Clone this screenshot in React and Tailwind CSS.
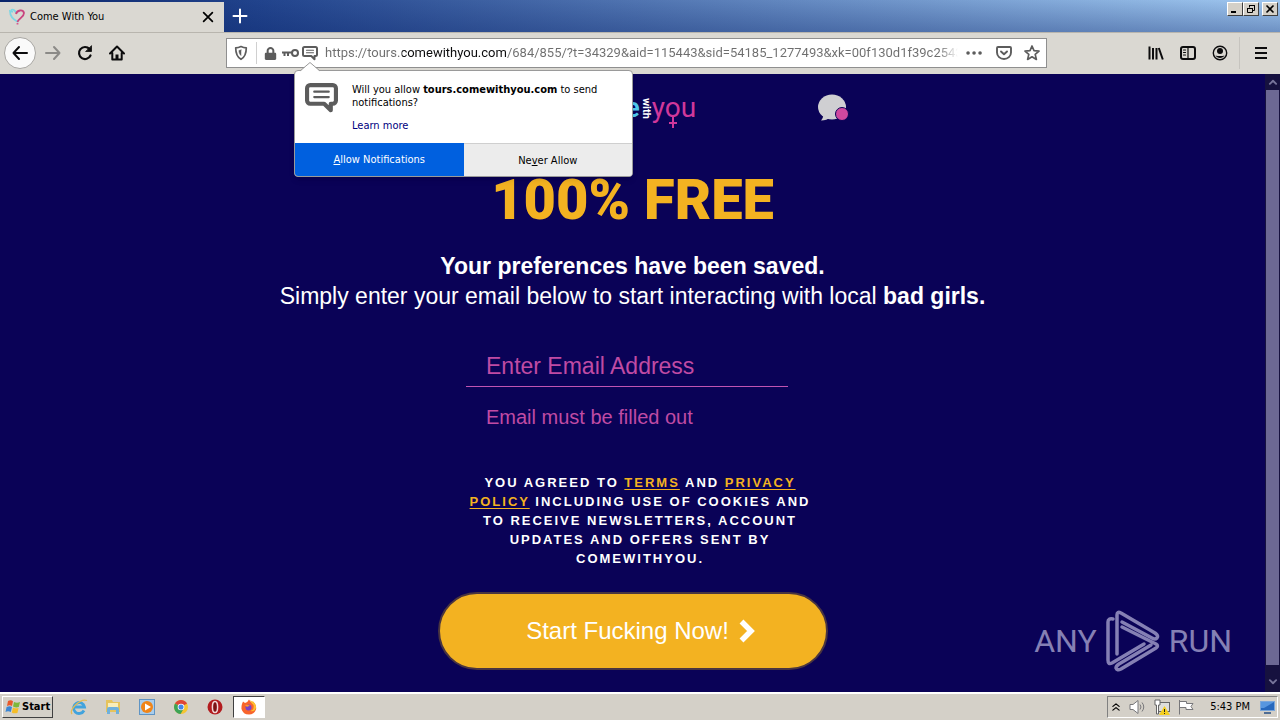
import React, { useState } from 'react';
import { FaLock } from 'react-icons/fa';

const ADDRESS =
  'https://tours.comewithyou.com/684/855/?t=34329&aid=115443&sid=54185_1277493&xk=00f130d1f39c2543a';

function Icon({ size = 16, className = '', children }) {
  return (
    <svg
      width={size}
      height={size}
      viewBox="0 0 16 16"
      fill="none"
      stroke="currentColor"
      strokeWidth="2"
      strokeLinecap="round"
      strokeLinejoin="round"
      className={className}
      aria-hidden="true"
    >
      {children}
    </svg>
  );
}

function ToolButton({ label, children }) {
  return (
    <button aria-label={label} className="flex h-8 w-8 shrink-0 items-center justify-center text-[#0c0c0d]">
      {children}
    </button>
  );
}

function WindowButton({ label, children }) {
  return (
    <button
      aria-label={label}
      className="flex h-[14px] w-4 items-center justify-center border border-t-white border-l-white border-r-[#404040] border-b-[#404040] bg-[#d4d0c8] text-black"
    >
      <svg width="10" height="10" viewBox="0 0 10 10" fill="none" stroke="currentColor" aria-hidden="true">
        {children}
      </svg>
    </button>
  );
}

function TitleBar() {
  return (
    <div className="flex h-8 shrink-0 bg-[linear-gradient(to_bottom,transparent,#0a246a55),linear-gradient(to_right,#0a246a,#21438c_20%,#a0c8f0)]">
      <div className="mt-[2px] flex w-56 items-center gap-1 bg-[#dad8d2] pl-2">
        <svg width="18" height="18" viewBox="0 0 18 18" fill="none" strokeWidth="1.8" aria-hidden="true">
          <path d="M10 14C6 12 2 8 2 3l3 1M3 2c2-1 4 0 5 3" stroke="#7fd6e4" />
          <path d="M8 6c1-4 7-5 8-1 0 4-5 5-6.500 9" stroke="#c9447f" />
          <path d="M9.500 15v1.500" stroke="#d8558f" />
        </svg>
        <span className="flex-1 text-[11px]">Come With You</span>
        <button aria-label="Close tab" className="flex h-8 w-8 items-center justify-center">
          <Icon size={14}>
            <path d="M3 3l10 10M13 3L3 13" />
          </Icon>
        </button>
      </div>
      <button aria-label="New tab" className="flex h-8 w-8 items-center justify-center text-white">
        <Icon>
          <path d="M8 1.500v13M1.500 8h13" />
        </Icon>
      </button>
      <div className="ml-auto flex h-[18px] items-center pr-[2px]">
        <WindowButton label="Minimize">
          <path d="M1 8h5" strokeWidth="2" />
        </WindowButton>
        <WindowButton label="Restore">
          <path d="M3.500 3.500v-2h5v5h-2M3 1.500h6M1.500 4.500h5v4h-5zM1 4.500h6" />
        </WindowButton>
        <span className="w-[3px]" />
        <WindowButton label="Close">
          <path d="M1.500 1.500l7 7M8.500 1.500l-7 7" strokeWidth="1.600" />
        </WindowButton>
      </div>
    </div>
  );
}

function ChatGlyph({ size }) {
  return (
    <Icon size={size}>
      <path d="M2.500 2h11a1.500 1.500 0 0 1 1.500 1.500v6a1.500 1.500 0 0 1-1.500 1.500H12.500v3.200L9.300 11h-6.800A1.500 1.500 0 0 1 1 9.500v-6A1.500 1.500 0 0 1 2.500 2z" />
      <path d="M4.500 5.200h7M4.500 7.800h7" strokeWidth="1.100" />
    </Icon>
  );
}

function NotificationPopup() {
  return (
    <div className="absolute top-full left-[67px] z-20 mt-[3px] w-[339px] rounded-[4px] border border-[#9a9a9a] bg-white text-[11px] leading-[13px] text-black shadow-md">
      <svg width="20" height="10" viewBox="0 0 20 10" className="absolute -top-[9px] left-[5px]" aria-hidden="true">
        <path d="M0 9.500L10 0.500L20 9.500V10H0z" fill="#fff" />
        <path d="M0 9L10 0.500L20 9" fill="none" stroke="#9a9a9a" />
      </svg>
      <div className="flex h-[72px] gap-[14px] pt-[10px] pl-[10px]">
        <span className="shrink-0 text-[#5c5c5c]">
          <ChatGlyph size={33} />
        </span>
        <div className="pt-[2px] pr-6">
          <p>
            Will you allow <b>tours.comewithyou.com</b> to send
            <br />
            notifications?
          </p>
          <a href="#learn" className="mt-[10px] block text-[#000080]">
            Learn more
          </a>
        </div>
      </div>
      <div className="flex h-[33px]">
        <button className="flex-1 rounded-bl-[3px] bg-[#0060df] text-white">
          <u>A</u>llow Notifications
        </button>
        <button className="flex-1 rounded-br-[3px] border-t border-[#cfcfcf] bg-[#ececec]">
          Ne<u>v</u>er Allow
        </button>
      </div>
    </div>
  );
}

function AddressBar() {
  const [url, setUrl] = useState(ADDRESS);

  return (
    <div className="relative mx-[93px] flex h-[30px] min-w-0 flex-1 items-center border border-[#8f8f8f] bg-white text-[#5c5c5c]">
      <span className="flex w-7 justify-center">
        <Icon>
          <path d="M8 1.500c2 1 3.500 1.300 5.300 1.300 0 5.500-1 9.200-5.300 11.500C3.700 12 2.700 8.300 2.700 2.800 4.500 2.800 6 2.500 8 1.500z" strokeWidth="1.700" />
          <path d="M8 5v5.500c-1.500-1.200-2-2.800-2.100-5C6.700 5.400 7.400 5.200 8 5z" fill="currentColor" strokeWidth="0.500" />
        </Icon>
      </span>
      <span className="mr-[7px] ml-px h-[22px] w-px bg-[#d0d0d0]" />
      <FaLock size={13} />
      <svg width="17" height="16" viewBox="0 0 17 16" fill="none" stroke="currentColor" strokeWidth="2" className="ml-[5px]" aria-hidden="true">
        <circle cx="13" cy="8" r="3" />
        <path d="M0 7.500h10M2.500 8v3M6 8v3" />
      </svg>
      <span className="ml-[3px]">
        <ChatGlyph size={16} />
      </span>
      <input
        type="text"
        aria-label="Address"
        value={url}
        onChange={(e) => setUrl(e.target.value)}
        className="ml-[7px] min-w-0 flex-1 bg-[linear-gradient(to_right,#6e6e6e_77px,#0c0c0d_77px,#0c0c0d_182px,#6e6e6e_182px,#6e6e6e_97%,transparent)] bg-clip-text font-['Roboto','Liberation_Sans',sans-serif] text-[13px] text-transparent outline-none"
      />
      <button aria-label="Page actions" className="flex w-8 justify-center">
        <Icon>
          <path d="M2 8h.1M8 8h.1M14 8h.1" strokeWidth="3.500" />
        </Icon>
      </button>
      <button aria-label="Save to Pocket" className="flex w-7 justify-center">
        <Icon>
          <path d="M2 2h12a1 1 0 0 1 1 1v4.500a7 6.500 0 0 1-14 0V3a1 1 0 0 1 1-1zM5 6.500l3 2.800 3-2.800" strokeWidth="1.900" />
        </Icon>
      </button>
      <button aria-label="Bookmark this page" className="flex w-7 justify-center">
        <Icon>
          <path d="M8 1l2 4.600 5 .5-3.800 3.300 1.200 5L8 11.800l-4.400 2.600 1.200-5L1 6.100l5-.5z" strokeWidth="1.700" />
        </Icon>
      </button>
      <NotificationPopup />
    </div>
  );
}

function Toolbar() {
  return (
    <div className="flex h-[42px] shrink-0 items-center border-t border-[#b8b5ae] bg-[#dad8d2] pr-[3px] pb-px pl-1">
      <button
        aria-label="Back"
        className="mr-px flex h-8 w-8 shrink-0 items-center justify-center rounded-full border border-[#a8a6a2] bg-[#fafafa] text-[#0c0c0d]"
      >
        <Icon>
          <path d="M15 8H1.500M7 2L1.500 8l5.500 6" />
        </Icon>
      </button>
      <button aria-label="Forward" disabled className="flex h-8 w-8 shrink-0 items-center justify-center text-[#8b8a87]">
        <Icon>
          <path d="M1 8h13.500M9 2l5.500 6L9 14" />
        </Icon>
      </button>
      <ToolButton label="Reload">
        <Icon>
          <path d="M13.500 10.500A6 6 0 1 1 12.500 4" strokeWidth="2.200" />
          <path d="M14.500 1v5.500H9z" fill="currentColor" strokeWidth="0.800" />
        </Icon>
      </ToolButton>
      <ToolButton label="Home">
        <Icon>
          <path d="M1 8.500L8 1.500l7 7M3.300 8v6.500h9.400V8" />
          <path d="M8 9.500v4.500" strokeWidth="3" strokeLinecap="butt" />
        </Icon>
      </ToolButton>
      <AddressBar />
      <ToolButton label="Library">
        <Icon>
          <path d="M1.500 1.500v13M5 3v11.500M8.500 3v11.500M10.800 3l4 11.500" strokeLinecap="butt" />
        </Icon>
      </ToolButton>
      <ToolButton label="Sidebars">
        <Icon>
          <rect x="1" y="2" width="14" height="12" rx="2" />
          <path d="M8 2v12M3.500 5h2M3.500 7.500h2M3.500 10h2" strokeWidth="1.200" />
        </Icon>
      </ToolButton>
      <ToolButton label="Account">
        <Icon>
          <circle cx="8" cy="8" r="6.700" strokeWidth="1.400" />
          <circle cx="8" cy="6" r="3" fill="currentColor" stroke="none" />
          <path d="M3.500 10.500c2 .8 7 .8 9 0-1.500 3.300-7.500 3.300-9 0z" fill="currentColor" stroke="none" />
        </Icon>
      </ToolButton>
      <span className="mr-[5px] ml-[3px] h-8 w-px bg-[#c6c4bf]" />
      <ToolButton label="Menu">
        <Icon>
          <path d="M2 3h12M2 8h12M2 13h12" strokeLinecap="butt" />
        </Icon>
      </ToolButton>
    </div>
  );
}

function SiteLogo() {
  return (
    <div className="flex items-center font-['Roboto','Liberation_Sans',sans-serif] text-[28px] leading-10">
      <span className="ml-14 font-semibold text-[#4fc8ee]">e</span>
      <span className="mx-px text-[11px] leading-3 font-bold text-white [writing-mode:vertical-rl]">with</span>
      <span className="relative text-[#d0389b]">
        you
        <svg width="10" height="12" viewBox="0 0 10 12" stroke="#d0389b" strokeWidth="2" className="absolute bottom-0 left-4" aria-hidden="true">
          <path d="M5 0v12M1 7h8" />
        </svg>
      </span>
    </div>
  );
}

function Watermark() {
  return (
    <div className="absolute right-12 bottom-5 z-10 flex items-center gap-2 font-['Roboto','Liberation_Sans',sans-serif] text-[32px] leading-none text-[#8580b4]">
      <span>ANY</span>
      <svg width="56" height="62" viewBox="0 0 56 62" fill="none" stroke="currentColor" strokeWidth="3.500" strokeLinejoin="round" strokeLinecap="round" aria-hidden="true">
        <path d="M12 44V5q0-4 4-2L50 23q4 3 2 5-2 2-5 0L17 12" />
        <path d="M8 9Q3 8 3 12v38q0 5 4 3L39 34" />
        <path d="M17 17l34 17q3 2 0 4L16 59q-4 2-5-1 0-2 3-4L46 35" />
      </svg>
      <span>RUN</span>
    </div>
  );
}

function SignupPage() {
  const [email, setEmail] = useState('');

  return (
    <main className="flex min-w-0 flex-1 flex-col items-center overflow-hidden font-['Liberation_Sans',Arial,sans-serif] text-white">
      <header className="grid w-full grid-cols-[1fr_auto_1fr] items-center pt-[14px]">
        <span />
        <SiteLogo />
        <button aria-label="Messages" className="relative ml-[122px] w-[31px]">
          <svg width="29" height="28" viewBox="0 0 29 28" fill="#cfcfd2" aria-hidden="true">
            <ellipse cx="14" cy="13" rx="14" ry="12.500" />
            <path d="M5 19q1 4-2 7.500 6 0 9-3z" />
          </svg>
          <span className="absolute right-0 bottom-px h-[14px] w-[14px] rounded-full border border-[#0a0257] bg-[#d0489f]" />
        </button>
      </header>

      <h1 className="mt-9 font-['Roboto','Liberation_Sans',sans-serif] text-[56px] leading-[72px] font-black text-[#f3b221]">
        100% FREE
      </h1>
      <p className="mt-[15px] text-center text-[23px] leading-[30px]">
        <b>Your preferences have been saved.</b>
        <br />
        Simply enter your email below to start interacting with local <b>bad girls.</b>
      </p>

      <form className="mt-9 flex flex-col items-center" onSubmit={(e) => e.preventDefault()}>
        <div className="ml-[15px] w-[348px]">
          <input
            type="email"
            aria-label="Enter Email Address"
            placeholder="Enter Email Address"
            value={email}
            onChange={(e) => setEmail(e.target.value)}
            className="h-10 w-[322px] border-b border-[#c054b2] px-5 text-[23px] text-[#c04ba4] outline-none placeholder:text-[#c04ba4]"
          />
          <p className="mt-3 px-5 text-[20px] leading-9 text-[#c04ba4]">Email must be filled out</p>
          <p className="mt-[38px] text-center text-[13px] leading-[19px] font-bold tracking-[2px] whitespace-nowrap uppercase">
            <span className="block">
              You agreed to <a href="#terms" className="text-[#f3b221] underline underline-offset-2">Terms</a> and{' '}
              <a href="#privacy" className="text-[#f3b221] underline underline-offset-2">Privacy</a>
            </span>
            <span className="block">
              <a href="#privacy" className="text-[#f3b221] underline underline-offset-2">Policy</a> including use of cookies and
            </span>
            <span className="block">to receive newsletters, account</span>
            <span className="block">updates and offers sent by</span>
            <span className="block">ComeWithYou.</span>
          </p>
        </div>
        <button className="mt-6 flex h-[78px] w-[390px] items-center justify-center gap-[10px] rounded-full border-2 border-[#4a3540] bg-[#f3b221] pl-4 text-[24px]">
          Start Fucking Now!
          <svg width="16" height="24" viewBox="0 0 16 24" fill="none" stroke="currentColor" strokeWidth="5.500" aria-hidden="true">
            <path d="M2.500 2.500L12 12l-9.500 9.500" />
          </svg>
        </button>
      </form>
    </main>
  );
}

function ScrollBar() {
  return (
    <div className="flex w-[15px] shrink-0 flex-col items-center bg-[#16113f] text-[#77749a]">
      <Icon size={10} className="my-[3px]">
        <path d="M3 11l5-5 5 5" strokeWidth="3" />
      </Icon>
      <div className="w-[13px] flex-1 bg-[#6c6894]" />
      <Icon size={10} className="mt-3 mb-[5px]">
        <path d="M3 5l5 5 5-5" strokeWidth="3" />
      </Icon>
    </div>
  );
}

function Taskbar() {
  return (
    <footer className="flex h-7 shrink-0 items-center border-t-2 border-white bg-[#d4d0c8] px-[2px] text-black">
      <button className="flex h-[22px] items-center gap-px border border-t-white border-l-white border-r-[#404040] border-b-[#404040] px-[2px] text-[11px] font-bold">
        <svg width="16" height="16" viewBox="0 0 16 16" aria-hidden="true">
          <path d="M3 2q3-1.500 5 .3L7 7Q5 5.500 2 7z" fill="#e8592a" />
          <path d="M9 3q3 1.500 6 0l-1.200 5Q11 9 8 7.500z" fill="#7db83a" />
          <path d="M1.600 8Q5 6.700 7 8l-1.200 5Q3 11.500.5 13z" fill="#3b86d4" />
          <path d="M8 8.500q3 1.500 5.600.4l-1.200 5Q9 15 6.800 13.500z" fill="#f5bd28" />
        </svg>
        Start
      </button>

      <nav className="ml-[10px] flex items-center gap-[2px]">
        <button aria-label="Internet Explorer" className="flex h-[22px] w-8 items-center justify-center">
          <svg width="18" height="18" viewBox="0 0 18 18" fill="none" aria-hidden="true">
            <path d="M14 12.500A5.500 5.500 0 1 1 14.500 9H5" stroke="#41a3dd" strokeWidth="2.800" />
            <path d="M2 16C-1 12 10 0 17 2.500" stroke="#e3bb55" strokeWidth="1.300" />
          </svg>
        </button>
        <button aria-label="File Explorer" className="flex h-[22px] w-8 items-center justify-center">
          <svg width="18" height="18" viewBox="0 0 18 18" aria-hidden="true">
            <path d="M2 2h6l1 2h7v10H2z" fill="#e6c35c" />
            <path d="M4 5h10v5H4z" fill="#f8edba" />
            <path d="M3 16v-5q0-2 2-2h8q2 0 2 2v5h-3v-4H6v4z" fill="#6fb0dc" />
          </svg>
        </button>
        <button aria-label="Media Player" className="flex h-[22px] w-8 items-center justify-center">
          <svg width="16" height="16" viewBox="0 0 16 16" aria-hidden="true">
            <rect x=".5" y=".5" width="15" height="15" fill="#a9cdec" stroke="#5f94c4" />
            <circle cx="8" cy="8" r="6" fill="#f08519" />
            <path d="M6 4.500v7L12 8z" fill="#fff" />
          </svg>
        </button>
        <button aria-label="Chrome" className="flex h-[22px] w-8 items-center justify-center">
          <svg width="14" height="14" viewBox="0 0 16 16" aria-hidden="true">
            <circle cx="8" cy="8" r="8" fill="#f5c532" />
            <path d="M8 8L1.100 4A8 8 0 0 1 14.900 4z" fill="#de4638" />
            <path d="M8 8L1.100 4A8 8 0 0 0 7.500 16L11 10z" fill="#3da356" />
            <circle cx="8" cy="8" r="3.800" fill="#fff" />
            <circle cx="8" cy="8" r="2.900" fill="#4486e8" />
          </svg>
        </button>
        <button aria-label="Opera" className="flex h-[22px] w-8 items-center justify-center">
          <svg width="16" height="16" viewBox="0 0 16 16" aria-hidden="true">
            <circle cx="8" cy="8" r="7.500" fill="#b31c1f" />
            <ellipse cx="8" cy="8" rx="2.600" ry="5.600" fill="#7c1214" stroke="#f1d9d9" strokeWidth="1.500" />
          </svg>
        </button>
        <button
          aria-label="Firefox"
          className="flex h-[22px] w-8 items-center justify-center border border-t-[#404040] border-l-[#404040] border-r-white border-b-white bg-white"
        >
          <svg width="16" height="16" viewBox="0 0 16 16" aria-hidden="true">
            <path d="M1 5l1-2.500L4 4q3-1 4-3.500 1 2 3 3l1-1q4 4 3 8-2 5-7 5-6 0-7.500-5.500Q.3 7 1 5z" fill="#f8642c" />
            <path d="M9 1q1 3 3.500 5 1 5-3 6 4 1 5.500-3 .5-4-3-6.500-1 0-3-1.500z" fill="#fdc02f" />
            <circle cx="7.500" cy="8.500" r="3" fill="#7a42c8" />
            <path d="M4 6q3-1 5 1-2 0-3 1z" fill="#f99b2b" />
          </svg>
        </button>
      </nav>

      <div className="ml-auto flex h-[22px] items-center gap-2 border border-t-[#808080] border-l-[#808080] border-r-white border-b-white pr-px pl-[3px] text-[11px]">
        <Icon size={10}>
          <path d="M3 7l5-4 5 4M3 13l5-4 5 4" />
        </Icon>
        <svg width="17" height="16" viewBox="0 0 17 16" fill="#fff" stroke="#77777a" aria-hidden="true">
          <path d="M1 5.500h3L9 1.500v13L4 10.500H1z" />
          <path d="M11 5.500q2 2.500 0 5M13 3.500q3.500 4.500 0 9" fill="none" />
        </svg>
        <svg width="16" height="16" viewBox="0 0 16 16" aria-hidden="true">
          <rect x="3.500" y="3.500" width="12" height="9" fill="#dededb" stroke="#666" />
          <path d="M1 1h5v5H4.500v9h-2V6H1z" fill="#fff" stroke="#666" />
          <path d="M10.500 7l5.500 9H5z" fill="#f5cf1f" />
          <path d="M10.500 10v3M10.500 14v1" stroke="#222" />
        </svg>
        <svg width="16" height="16" viewBox="0 0 16 16" fill="#fff" stroke="#77777a" aria-hidden="true">
          <path d="M1.500 1v14.500M1.500 2.500h7v2h6.500l-2 3 2 3H8v-2H1.500z" />
        </svg>
        <span className="ml-2">5:43 PM</span>
        <svg width="17" height="16" viewBox="0 0 17 16" className="ml-px" aria-hidden="true">
          <rect x="1.500" y="2.500" width="14" height="9" fill="#2768bd" stroke="#7aa6da" />
          <path d="M2 3h13L5 9H2z" fill="#5796df" />
          <path d="M5 14h7" stroke="#4f6d94" strokeWidth="2" />
        </svg>
      </div>
    </footer>
  );
}

function App() {
  return (
    <div className="flex min-h-screen flex-col bg-[#0a0257] font-['DejaVu_Sans_Condensed','DejaVu_Sans',sans-serif] text-black">
      <TitleBar />
      <Toolbar />
      <div className="relative flex flex-1">
        <SignupPage />
        <ScrollBar />
        <Watermark />
      </div>
      <Taskbar />
    </div>
  );
}

export default App;
